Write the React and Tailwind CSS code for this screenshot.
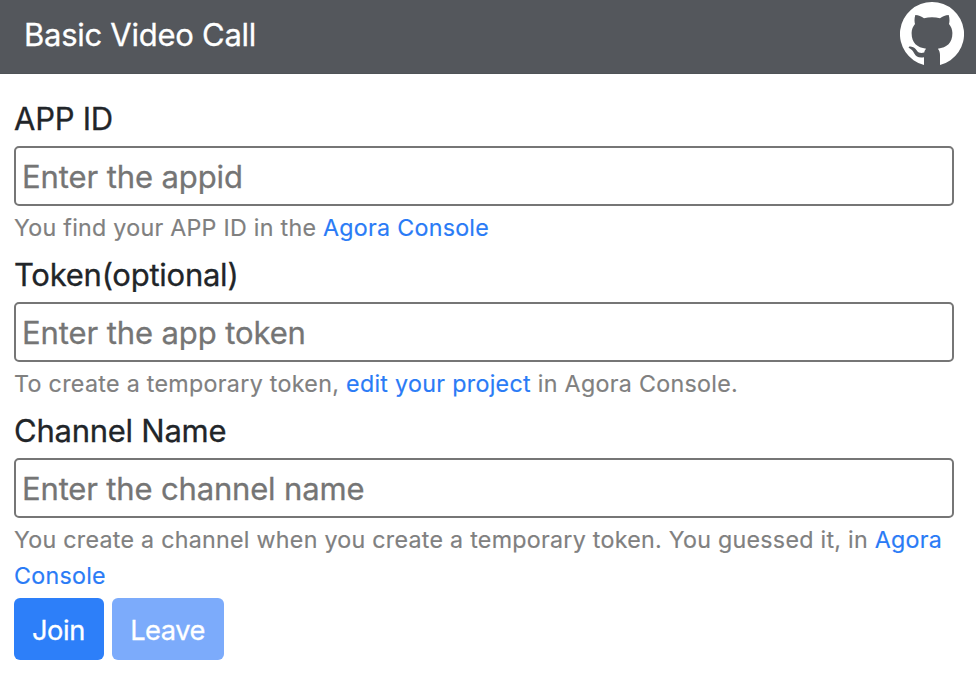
import React from "react";

const fields = [
  {
    label: "APP ID",
    placeholder: "Enter the appid",
    spacing: "tracking-[0.26px]",
    inputSpacing: "tracking-[-0.1px]",
    hint: (
      <>
        You find your APP ID in the <Link>Agora Console</Link>
      </>
    ),
  },
  {
    label: "Token(optional)",
    placeholder: "Enter the app token",
    spacing: "tracking-[0.3px]",
    inputSpacing: "tracking-[-0.1px]",
    hint: (
      <>
        To create a temporary token, <Link>edit your project</Link> in Agora Console.
      </>
    ),
  },
  {
    label: "Channel Name",
    placeholder: "Enter the channel name",
    spacing: "tracking-[0.26px]",
    inputSpacing: "tracking-[-0.16px]",
    hint: (
      <>
        You create a channel when you create a temporary token. You guessed it, in <Link>Agora Console</Link>
      </>
    ),
  },
];

function Link({ children }) {
  return <a href="#" className="text-[#2a7bf6]">{children}</a>;
}

function GithubMark() {
  return (
    <svg viewBox="0 0 64 64" className="size-16" aria-label="GitHub">
      <path
        className="fill-white"
        d="M32 0a32 32 0 0 0-8 63V55.200C19 56 16 54.800 14.300 51.500C13 49 11.500 47.300 9.500 46.200C8 45.300 8.500 44.300 10.500 44.400C13.500 44.600 15.300 46.200 16.800 48.500C18.500 51 21 51.500 24.200 50.600C24.500 48.800 25.200 47.600 26.200 46.700C17 45.500 11.600 41 11.600 31C11.600 27.300 13 24.500 15 22C14.300 19.500 14.300 16.500 15.300 13C18.500 13 21.500 14.500 24 16.200C29 14.800 35 14.800 40 16.200C42.500 14.500 45.500 13 48.700 13C49.700 16.500 49.700 19.500 49 22C51 24.500 52.400 27.300 52.400 31C52.400 41 47 45.500 37.800 46.700C39.300 48.300 40 50.500 40 53V63A32 32 0 0 0 32 0Z"
      />
    </svg>
  );
}

export default function App() {
  return (
    <div className="h-[682px] w-[976px] overflow-hidden bg-white font-['Inter',sans-serif] text-[#212529] [-webkit-text-stroke:0.3px]">
      <header className="flex h-[74px] items-start justify-between border-b border-[#4f5357] bg-[#54575c] pt-[2px] pr-3 pl-6">
        <h1 className="pt-[9px] text-[31px] leading-[48px] tracking-[-0.27px] text-white">Basic Video Call</h1>
        <GithubMark />
      </header>
      <main className="px-3.5 pt-5">
        {fields.map((f) => (
          <div key={f.label}>
            <label className="block h-[52px] pt-[1px] text-[31px] leading-[48px] tracking-[-0.25px]">{f.label}</label>
            <input
              placeholder={f.placeholder}
              className={"block h-[60px] w-[940px] rounded-[5px] border-2 border-[#767676] px-[6px] text-[31px] placeholder:text-[#757575] " + f.inputSpacing}
            />
            <p className={"min-h-[44px] pt-[4px] text-[23.25px] leading-[36px] text-[#808080] [-webkit-text-stroke:0.15px] " + f.spacing}>{f.hint}</p>
          </div>
        ))}
        <div className="flex gap-2 pt-1">
          <button className="h-[62px] w-[90px] rounded-[6px] bg-[#2d7ff9] pt-[4px] pr-[1px] text-[27.25px] tracking-[-0.35px] text-white">Join</button>
          <button className="h-[62px] w-[112px] rounded-[6px] bg-[#7cabfb] pt-[4px] pr-[1px] text-[27.25px] tracking-[-0.5px] text-white">Leave</button>
        </div>
      </main>
    </div>
  );
}
